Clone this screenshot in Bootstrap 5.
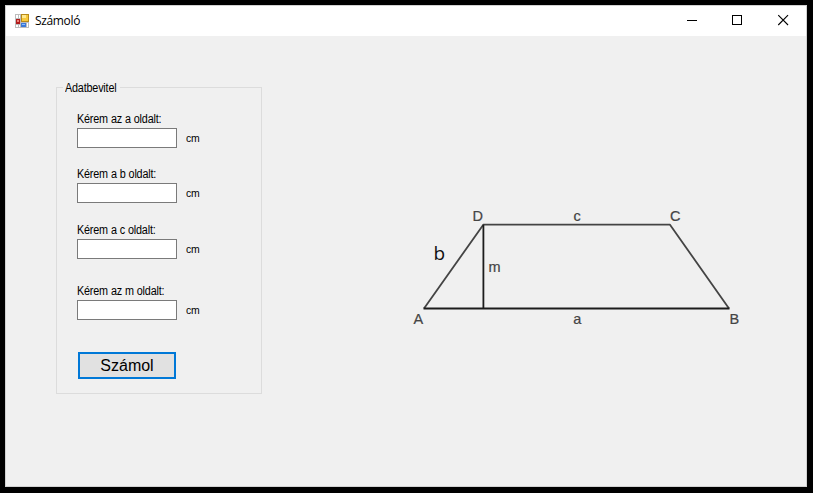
<!DOCTYPE html>
<html lang="hu">
<head>
<meta charset="utf-8">
<title>Számoló</title>
<link href="https://cdn.jsdelivr.net/npm/bootstrap@5.3.0/dist/css/bootstrap.min.css" rel="stylesheet">
<style>
html,body{height:100%}
body{background:#000;color:#000;padding:5px 6px 6px 5px;overflow:hidden;font-family:"Liberation Sans",Arial,sans-serif;font-size:12px;line-height:14px}
.app-window{background:#f0f0f0;border:1px solid #d2d2d2;height:482px}
.title-bar{height:30px;padding-left:9px}
.title-text{font-family:"Open Sans","Noto Sans",sans-serif;font-size:12px;letter-spacing:-.35px;margin-left:6px}
.caption-btn{width:45.5px;height:30px}
.workspace{padding:51px 0 0 50px}
.group-box{width:206px;height:307px;border:1px solid #dcdcdc;padding:0 0 0 20px}
.group-title{width:57px;height:14px;margin:-7px 0 0 -14px;padding-left:2px;background:#f0f0f0}
.narrow-text{display:inline-block;transform:scaleX(.9);transform-origin:0 50%;letter-spacing:-.2px;word-spacing:.2px;white-space:nowrap}
.field-block{height:37px}
.field-label{height:16px}
.field-input{width:100px;height:20px;min-height:0;border:1px solid #7a7a7a;padding:1px 3px;font-size:12px}
.unit{margin-left:8.5px;font-size:11.6px}
.calc-btn{width:98px;height:27px;border:2px solid #0078d7;background:#e1e1e1;font-size:16px;line-height:20px;margin-left:1px;color:#000}
.gap-first{margin-top:17px}.gap-a{margin-top:18px}.gap-b{margin-top:19px}.gap-c{margin-top:24px}.gap-btn{margin-top:31px}
.figure-area{margin:108px 0 0 138px}
</style>
<script src="https://cdn.jsdelivr.net/npm/bootstrap@5.3.0/dist/js/bootstrap.bundle.min.js"></script>
</head>
<body>
<main class="app-window d-flex flex-column">
  <header class="title-bar d-flex align-items-center bg-white flex-shrink-0">
    <svg width="14" height="14" viewBox="0 0 14 14" shape-rendering="crispEdges">
      <path fill="#bdbdbd" d="M0 0h14v14H0z"/>
      <path fill="#fff" d="M1 1h2v3H1zM4 1h1v3H4zM1 11h2v2H1zM4 11h1v2H4zM12 9h1v4h-1z"/>
      <path fill="#b01c1c" d="M1 5h4v5H1z"/><path fill="#ee8078" d="M2 6h2v2H2z"/>
      <path fill="#b88a18" d="M6 0h8v8H6z"/><path fill="#f7c93c" d="M7 1h6v6H7z"/><path fill="#ffe990" d="M7 1h4v3H7z"/>
      <path fill="#3c78d8" d="M6 9h5v4H6z"/><path fill="#8abffc" d="M7 10h3v1H7z"/>
    </svg>
    <span class="title-text">Számoló</span>
    <div class="d-flex ms-auto">
      <svg class="caption-btn" viewBox="0 0 45 30" shape-rendering="crispEdges"><path fill="#000" d="M17 14h10v1H17z"/></svg>
      <svg class="caption-btn" viewBox="0 0 45 30" shape-rendering="crispEdges"><path fill="none" stroke="#000" d="M17.5 9.5h9v9h-9z"/></svg>
      <svg class="caption-btn" viewBox="0 0 45 30"><path fill="none" stroke="#000" stroke-width="1.1" d="M17 9.2l9.8 9.8M26.8 9.2l-9.8 9.8"/></svg>
    </div>
  </header>
  <section class="workspace d-flex align-items-start">
    <form class="group-box">
      <div class="group-title"><span class="narrow-text">Adatbevitel</span></div>
      <div class="field-block gap-first">
        <label class="field-label d-block" for="sideA"><span class="narrow-text">Kérem az a oldalt:</span></label>
        <div class="d-flex align-items-center"><input class="form-control field-input rounded-0" id="sideA"><span class="unit narrow-text">cm</span></div>
      </div>
      <div class="field-block gap-a">
        <label class="field-label d-block" for="sideB"><span class="narrow-text">Kérem a b oldalt:</span></label>
        <div class="d-flex align-items-center"><input class="form-control field-input rounded-0" id="sideB"><span class="unit narrow-text">cm</span></div>
      </div>
      <div class="field-block gap-b">
        <label class="field-label d-block" for="sideC"><span class="narrow-text">Kérem a c oldalt:</span></label>
        <div class="d-flex align-items-center"><input class="form-control field-input rounded-0" id="sideC"><span class="unit narrow-text">cm</span></div>
      </div>
      <div class="field-block gap-c">
        <label class="field-label d-block" for="sideM"><span class="narrow-text">Kérem az m oldalt:</span></label>
        <div class="d-flex align-items-center"><input class="form-control field-input rounded-0" id="sideM"><span class="unit narrow-text">cm</span></div>
      </div>
      <button type="button" class="btn calc-btn gap-btn rounded-0 p-0 d-block">Számol</button>
    </form>
    <svg class="figure-area" width="360" height="150" viewBox="400 195 360 150" font-family="Liberation Sans, Arial, sans-serif">
      <g fill="none" stroke-width="1.8" stroke-linejoin="round">
        <path stroke="#444" d="M424 308.5L483.3 224.7H670L729 308.5"/>
        <path stroke="#1c1c1c" d="M423.5 308.5H729.5M483.4 224.7V308.5"/>
      </g>
      <g fill="#444" stroke="#444" stroke-width=".2" font-size="14.5">
        <text x="472.5" y="221">D</text><text x="573.5" y="221">c</text><text x="670" y="221">C</text>
        <text x="488.5" y="272">m</text><text x="413.5" y="324">A</text><text x="573.3" y="324">a</text><text x="729.5" y="324">B</text>
      </g>
      <text x="433.5" y="259.5" font-size="19" fill="#111" font-family="Open Sans, Noto Sans, sans-serif">b</text>
    </svg>
  </section>
</main>
</body>
</html>
